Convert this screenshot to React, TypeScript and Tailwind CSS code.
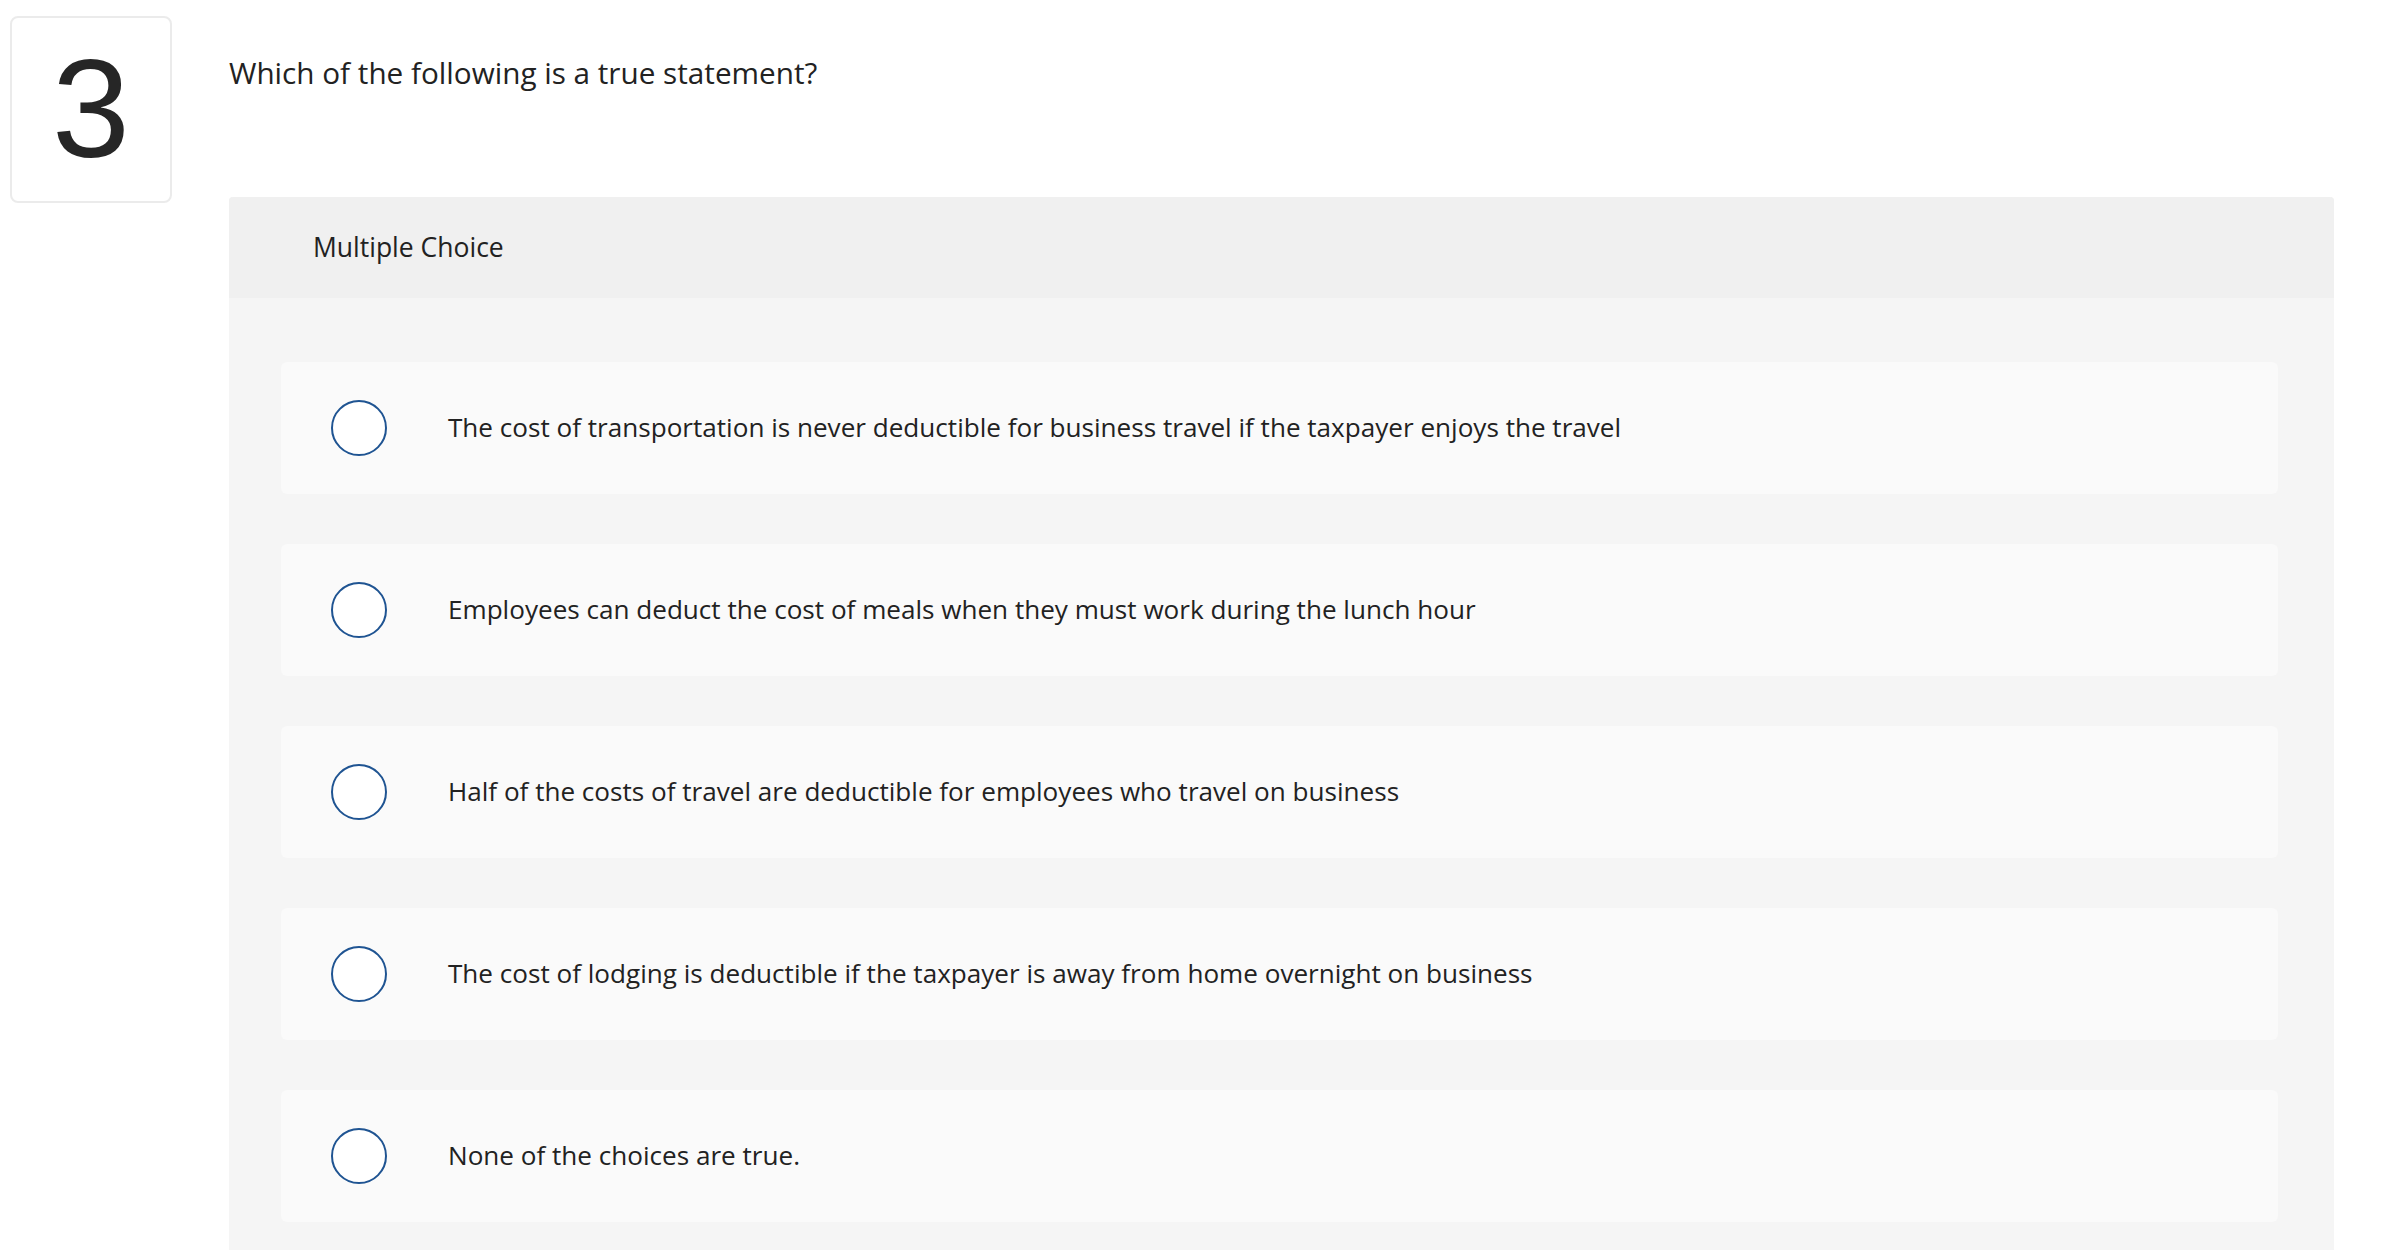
import React from 'react';

const choices = [
    'The cost of transportation is never deductible for business travel if the taxpayer enjoys the travel',
    'Employees can deduct the cost of meals when they must work during the lunch hour',
    'Half of the costs of travel are deductible for employees who travel on business',
    'The cost of lodging is deductible if the taxpayer is away from home overnight on business',
    'None of the choices are true.',
];

function Choice({ label }: { label: string }) {
    return (
        <div className="flex items-center h-[132px] rounded-md bg-[#fafafa] pl-[50px]">
            <span className="w-[56px] h-[56px] shrink-0 rounded-full border-[2.5px] border-[#1f5492] bg-white" />
            <span className="ml-[61px] text-[26.1px] text-[#222]">{label}</span>
        </div>
    );
}

export default function App() {
    return (
        <div className="flex h-[1256px] w-full overflow-hidden bg-white font-['Open_Sans','Liberation_Sans',sans-serif]">
            <div className="ml-[10px] mt-[16px] flex h-[187px] w-[162px] shrink-0 items-center justify-center rounded-lg border-2 border-[#ebebeb]">
                <span className="text-[140px] leading-none text-[#262626] font-['Liberation_Sans',sans-serif] -mt-[2px]">3</span>
            </div>

            <div className="ml-[57px] mr-[47px] flex flex-1 flex-col">
                <h1 className="mt-[52px] h-[145px] shrink-0 text-[29.7px] leading-[42px] text-[#222]">
                    Which of the following is a true statement?
                </h1>

                <div className="flex flex-1 flex-col rounded-t bg-[#f5f5f5] mb-[6px]">
                    <div className="flex h-[101px] shrink-0 items-center rounded-t bg-[#f0f0f0] pl-[84px] text-[26.5px] text-[#222]">
                        Multiple Choice
                    </div>
                    <div className="flex flex-col gap-[50px] pl-[52px] pr-[56px] pt-[64px]">
                        {choices.map((c) => (
                            <Choice key={c} label={c} />
                        ))}
                    </div>
                </div>
            </div>
        </div>
    );
}
